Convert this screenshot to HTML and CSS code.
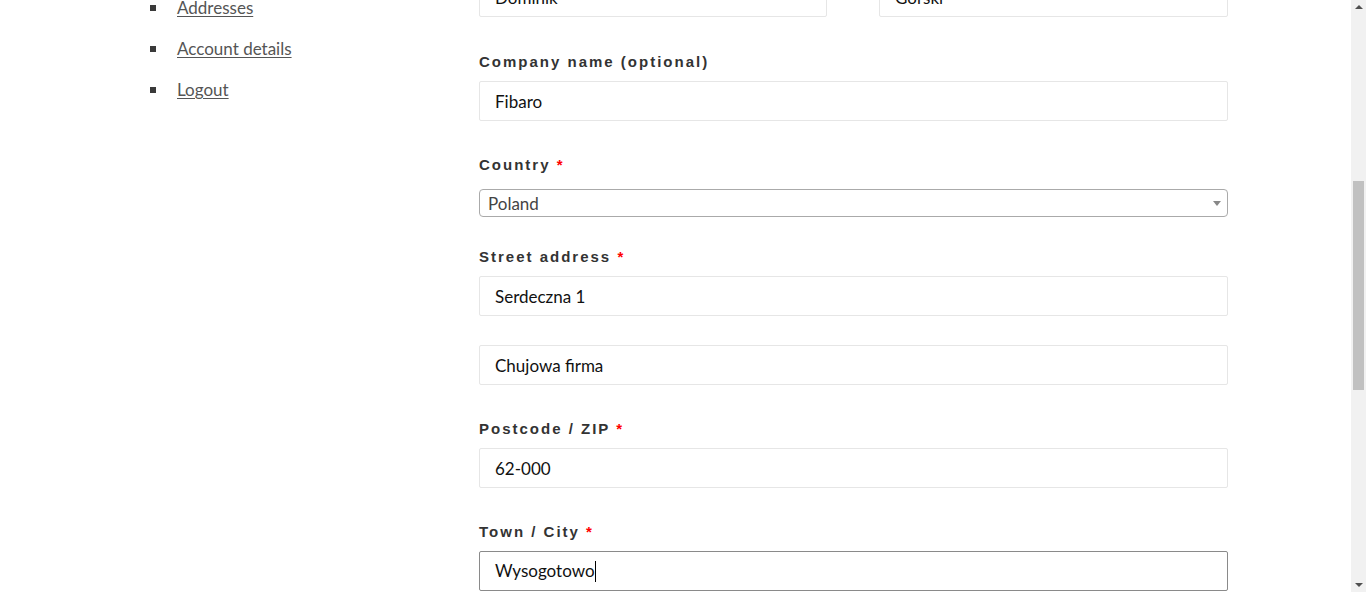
FILE: index.html
```html
<!DOCTYPE html>
<html lang="en">
<head>
<meta charset="utf-8">
<title>Account details</title>
<link rel="stylesheet" href="styles.css">
</head>
<body>
<div class="page">
  <nav class="account-nav">
    <ul>
      <li><a href="#">Dashboard</a></li>
      <li><a href="#">Orders</a></li>
      <li><a href="#">Downloads</a></li>
      <li><a href="#">Addresses</a></li>
      <li><a href="#">Account details</a></li>
      <li><a href="#">Logout</a></li>
    </ul>
  </nav>
  <main class="content">
    <form class="address-form">
      <div class="row row-split">
        <div class="field">
          <label class="label">First name <abbr class="req">*</abbr></label>
          <input class="input" type="text" value="Dominik">
        </div>
        <div class="field">
          <label class="label">Last name <abbr class="req">*</abbr></label>
          <input class="input" type="text" value="Gorski">
        </div>
      </div>
      <div class="row">
        <label class="label">Company name (optional)</label>
        <input class="input" type="text" value="Fibaro">
      </div>
      <div class="row row-select">
        <label class="label">Country <abbr class="req">*</abbr></label>
        <div class="select">
          <span class="select-value">Poland</span>
          <span class="select-arrow"></span>
        </div>
      </div>
      <div class="row">
        <label class="label">Street address <abbr class="req">*</abbr></label>
        <input class="input" type="text" value="Serdeczna 1">
        <input class="input input-second" type="text" value="Chujowa firma">
      </div>
      <div class="row">
        <label class="label">Postcode / ZIP <abbr class="req">*</abbr></label>
        <input class="input" type="text" value="62-000">
      </div>
      <div class="row">
        <label class="label">Town / City <abbr class="req">*</abbr></label>
        <div class="input input-focused">Wysogotowo<span class="caret"></span></div>
      </div>
    </form>
  </main>
</div>
<div class="scrollbar">
  <span class="sb-arrow sb-up"></span>
  <span class="sb-thumb"></span>
  <span class="sb-arrow sb-down"></span>
</div>
</body>
</html>
```

FILE: styles.css
```css
html, body {
  margin: 0;
  padding: 0;
  overflow: hidden;
  background: #fff;
}

body {
  font-family: Lato, "Noto Sans", sans-serif;
  color: #111;
}

.page {
  display: grid;
  grid-template-columns: 329px 749px;
  padding-left: 150px;
  margin-top: -54px;
}

/* Sidebar navigation */
.account-nav ul {
  list-style: none;
  margin: -82px 0 0;
  padding: 0;
}

.account-nav li {
  display: flex;
  align-items: center;
  gap: 21px;
  height: 41px;
}

.account-nav li::before {
  content: "";
  width: 6px;
  height: 6px;
  background: #3a3a3a;
  flex: none;
}

.account-nav a {
  color: #555;
  font-size: 17px;
  text-decoration: underline;
  text-underline-offset: 2px;
}

/* Form */
.address-form {
  display: flex;
  flex-direction: column;
}

.row {
  display: flex;
  flex-direction: column;
  margin-bottom: 32px;
}

.row-split {
  display: grid;
  grid-template-columns: 348px 349px;
  column-gap: 52px;
  margin-bottom: 33px;
}

.field {
  display: flex;
  flex-direction: column;
}

.label {
  display: block;
  font-family: "Liberation Sans", Arial, sans-serif;
  font-weight: bold;
  font-size: 15px;
  letter-spacing: 2px;
  line-height: 22px;
  color: #333;
  padding-top: 1px;
  margin-bottom: 8px;
}

.req {
  color: red;
  text-decoration: none;
  border: 0;
}

.input {
  box-sizing: border-box;
  display: block;
  width: 100%;
  height: 40px;
  margin: 0;
  padding: 0 15px;
  border: 1px solid #e6e6e6;
  border-radius: 2px;
  background: #fff;
  font-family: Lato, "Noto Sans", sans-serif;
  font-size: 17px;
  line-height: 38px;
  color: #111;
  outline: none;
}

.input-second {
  margin-top: 29px;
}

.input-focused {
  border-color: #8a8a8a;
  display: flex;
  align-items: center;
}

.caret {
  display: inline-block;
  width: 1px;
  height: 21px;
  background: #000;
  margin-left: 0;
}

.row-select {
  margin-bottom: 28px;
}

.select {
  box-sizing: border-box;
  height: 28px;
  margin-top: 5px;
  border: 1px solid #aaa;
  border-radius: 4px;
  display: flex;
  align-items: center;
  justify-content: space-between;
  padding: 0 6px 0 8px;
}

.select-value {
  font-size: 17px;
  color: #444;
  line-height: 26px;
  padding-top: 2px;
}

.select-arrow {
  width: 0;
  height: 0;
  border-left: 4px solid transparent;
  border-right: 4px solid transparent;
  border-top: 5px solid #888;
  margin-top: 1px;
}

/* Fake browser scrollbar */
.scrollbar {
  position: fixed;
  top: 0;
  right: 0;
  width: 15px;
  height: 100%;
  background: #f1f1f1;
}

.sb-thumb {
  position: absolute;
  left: 2px;
  top: 181px;
  width: 11px;
  height: 209px;
  background: #c1c1c1;
}

.sb-arrow {
  position: absolute;
  left: 4px;
  width: 0;
  height: 0;
  border-left: 4px solid transparent;
  border-right: 4px solid transparent;
}

.sb-up {
  top: 5px;
  border-bottom: 4px solid #505050;
}

.sb-down {
  bottom: 5px;
  border-top: 4px solid #505050;
}
```
